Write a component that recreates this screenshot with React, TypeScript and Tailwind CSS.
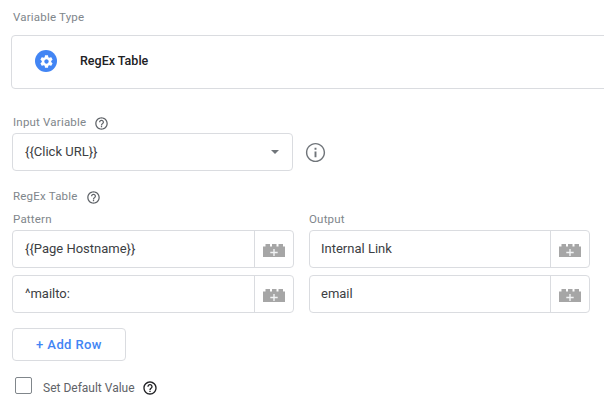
import React from "react";

const Help = ({ className = "" }: { className?: string }) => (
  <svg viewBox="0 0 24 24" className={className} fill="currentColor">
    <path d="M11 18h2v-2h-2v2zm1-16C6.48 2 2 6.48 2 12s4.48 10 10 10 10-4.48 10-10S17.52 2 12 2zm0 18c-4.41 0-8-3.59-8-8s3.59-8 8-8 8 3.59 8 8-3.59 8-8 8zm0-14c-2.21 0-4 1.79-4 4h2c0-1.1.9-2 2-2s2 .9 2 2c0 2-3 1.75-3 5h2c0-2.25 3-2.5 3-5 0-2.21-1.79-4-4-4z" />
  </svg>
);

const Brick = () => (
  <svg viewBox="0 0 22 13" className="w-[22px] h-[13px] mt-[2px]">
    <path fill="#a6a6a6" d="M0 2.500h2.500V0h4.500v2.500h2V0h4.500v2.500h2V0h4.500v2.500H22V13H0z" />
    <path fill="#f1f3f4" d="M10.300 5h1.400v2.800h3V9.200h-3V12h-1.400V9.200h-3V7.800h3z" />
  </svg>
);

const Field = ({ value, inset = "pl-[12px]" }: { value: string; inset?: string }) => (
  <div className="flex h-[38px] w-full rounded-[4px] border border-[#dadce0] bg-white">
    <div className={`flex-1 flex items-center ${inset} text-[13px] text-[#3c4043]`}>{value}</div>
    <div className="w-[39px] border-l border-[#dadce0] flex items-center justify-center">
      <Brick />
    </div>
  </div>
);

const Label = ({ children }: { children: React.ReactNode }) => (
  <div className="h-[14px] text-[11.5px] leading-[12px] tracking-[0.2px] text-[#80868b]">{children}</div>
);

export default function App() {
  return (
    <div
      className="w-[604px] h-[402px] overflow-hidden bg-white"
      style={{ fontFamily: "Roboto, sans-serif" }}
    >
      <div className="pl-[12px] pt-[11px]">
        <div className="pl-[1px]">
          <Label>Variable Type</Label>
        </div>
        <div className="mt-[10px] -ml-[1px] w-[640px] h-[54px] rounded-[4px] border border-[#dadce0] flex items-center pl-[23px] pb-[2px]">
          <div className="w-[22px] h-[22px] rounded-full bg-[#4285f4] flex items-center justify-center">
            <svg viewBox="0 0 24 24" className="w-[15px] h-[15px]" fill="#fff">
              <path d="M19.43 12.98c.04-.32.07-.64.07-.98s-.03-.66-.07-.98l2.11-1.65c.19-.15.24-.42.12-.64l-2-3.46c-.12-.22-.39-.3-.61-.22l-2.49 1c-.52-.4-1.08-.73-1.69-.98l-.38-2.65C14.46 2.18 14.25 2 14 2h-4c-.25 0-.46.18-.49.42l-.38 2.65c-.61.25-1.17.59-1.69.98l-2.49-1c-.23-.09-.49 0-.61.22l-2 3.460c-.13.22-.07.49.12.64l2.11 1.65c-.04.32-.07.65-.07.98s.03.66.07.98l-2.11 1.65c-.19.15-.24.42-.12.64l2 3.460c.12.22.39.3.61.22l2.49-1c.52.4 1.08.73 1.69.98l.38 2.65c.03.24.24.42.49.42h4c.25 0 .46-.18.49-.42l.38-2.65c.61-.25 1.17-.59 1.69-.98l2.49 1c.23.09.49 0 .61-.22l2-3.46c.12-.22.07-.49-.12-.64l-2.11-1.65zM12 15.500c-1.93 0-3.500-1.570-3.500-3.500s1.570-3.500 3.500-3.500 3.500 1.570 3.500 3.500-1.570 3.500-3.500 3.500z" />
            </svg>
          </div>
          <div className="ml-[23px] text-[12.5px] font-medium text-[#202124]">RegEx Table</div>
        </div>

        <div className="mt-[27px] pl-[1px] flex items-center gap-[8px] h-[14px]">
          <Label>Input Variable</Label>
          <Help className="w-[15px] h-[15px] text-[#5f6368]" />
        </div>
        <div className="mt-[3px] flex items-center">
          <div className="w-[281px] h-[38px] rounded-[4px] border border-[#dadce0] flex items-center justify-between pl-[12px] pr-[13px] text-[13px] text-[#3c4043]">
            <span>{"{{Click URL}}"}</span>
            <span className="w-0 h-0 border-x-[4px] border-x-transparent border-t-[4px] border-t-[#70757a]" />
          </div>
          <svg viewBox="0 0 24 24" className="ml-[11px] w-[23px] h-[23px] text-[#70757a]" fill="currentColor">
            <path d="M11 7h2v2h-2zm0 4h2v6h-2zm1-9C6.480 2 2 6.480 2 12s4.480 10 10 10 10-4.480 10-10S17.520 2 12 2zm0 18.500c-4.690 0-8.500-3.810-8.500-8.500S7.310 3.500 12 3.500s8.500 3.810 8.500 8.500-3.810 8.500-8.500 8.500z" />
          </svg>
        </div>

        <div className="mt-[19px] pl-[1px] flex items-center gap-[8px] h-[14px]">
          <Label>RegEx Table</Label>
          <Help className="w-[15px] h-[15px] text-[#5f6368]" />
        </div>

        <div className="mt-[9px] w-[578px] grid grid-cols-[282px_281px] gap-x-[15px]">
          <div className="pl-[1px]"><Label>Pattern</Label></div>
          <div><Label>Output</Label></div>
          <div className="mt-[3px]"><Field value="{{Page Hostname}}" /></div>
          <div className="mt-[3px]"><Field value="Internal Link" inset="pl-[11px]" /></div>
          <div className="mt-[7px]"><Field value="^mailto:" /></div>
          <div className="mt-[7px]"><Field value="email" inset="pl-[11px]" /></div>
        </div>

        <div className="mt-[15px] w-[114px] h-[33px] rounded-[4px] border border-[#dadce0] flex items-center justify-center text-[13px] font-medium tracking-[0.4px] text-[#4285f4]">
          + Add Row
        </div>

        <div className="mt-[16px] ml-[3px] flex items-start">
          <div className="w-[17px] h-[17px] rounded-[2px] border border-[#80868b]" />
          <div className="flex items-center mt-[2px]">
            <div className="ml-[11px] text-[12px] text-[#5f6368]">Set Default Value</div>
            <Help className="ml-[7px] w-[16px] h-[16px] text-[#202124]" />
          </div>
        </div>
      </div>
    </div>
  );
}
